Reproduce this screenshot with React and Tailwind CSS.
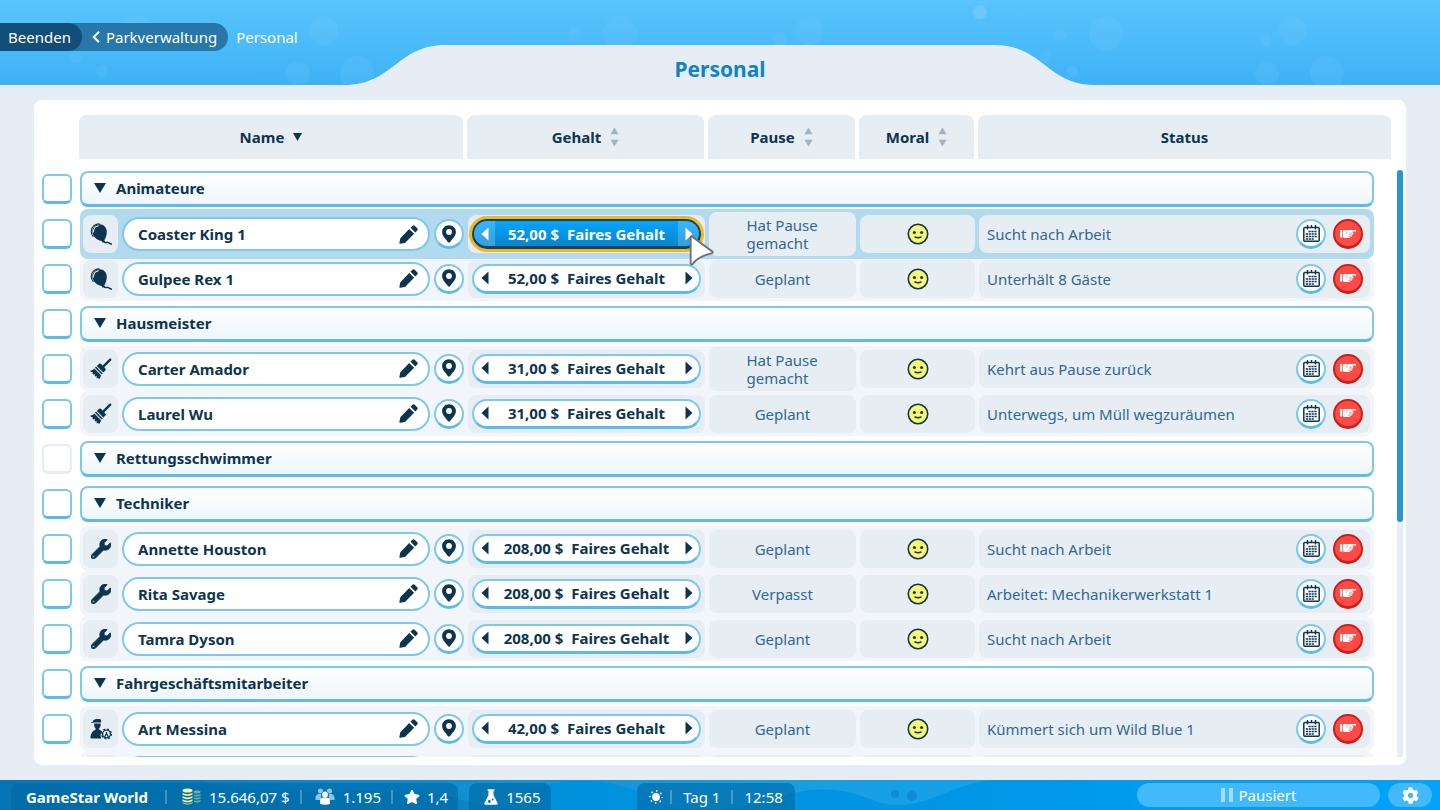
import { useState } from 'react'
import clsx from 'clsx'
import { FaCog, FaStar, FaWrench } from 'react-icons/fa'

const STAFF = [
  {
    id: 'animateure',
    title: 'Animateure',
    icon: BalloonIcon,
    members: [
      { name: 'Coaster King 1', salary: '52,00 $', pause: 'Hat Pause gemacht', status: 'Sucht nach Arbeit' },
      { name: 'Gulpee Rex 1', salary: '52,00 $', pause: 'Geplant', status: 'Unterhält 8 Gäste' },
    ],
  },
  {
    id: 'hausmeister',
    title: 'Hausmeister',
    icon: BroomIcon,
    members: [
      { name: 'Carter Amador', salary: '31,00 $', pause: 'Hat Pause gemacht', status: 'Kehrt aus Pause zurück' },
      { name: 'Laurel Wu', salary: '31,00 $', pause: 'Geplant', status: 'Unterwegs, um Müll wegzuräumen' },
    ],
  },
  { id: 'rettung', title: 'Rettungsschwimmer', icon: BalloonIcon, members: [] },
  {
    id: 'techniker',
    title: 'Techniker',
    icon: WrenchIcon,
    members: [
      { name: 'Annette Houston', salary: '208,00 $', pause: 'Geplant', status: 'Sucht nach Arbeit' },
      { name: 'Rita Savage', salary: '208,00 $', pause: 'Verpasst', status: 'Arbeitet: Mechanikerwerkstatt 1' },
      { name: 'Tamra Dyson', salary: '208,00 $', pause: 'Geplant', status: 'Sucht nach Arbeit' },
    ],
  },
  {
    id: 'fahrgeschaeft',
    title: 'Fahrgeschäftsmitarbeiter',
    icon: AttendantIcon,
    members: [
      { name: 'Art Messina', salary: '42,00 $', pause: 'Geplant', status: 'Kümmert sich um Wild Blue 1' },
    ],
  },
]

// x, y, r
const HEADER_BUBBLES = [
  [137, 33, 17], [76, 57, 6], [102, 71, 6], [298, 73, 12], [324, 31, 14], [357, 73, 17],
  [575, 34, 6], [620, 33, 17], [781, 40, 7], [809, 31, 14], [980, 12, 7], [1060, 35, 6],
  [1106, 34, 17], [1046, 57, 6], [1072, 71, 6], [1266, 40, 6], [1293, 31, 14], [1267, 73, 12], [1327, 73, 17],
]

/* ---------- icons ---------- */

function BalloonIcon() {
  return (
    <svg width="22" height="22" viewBox="0 0 22 22" fill="none" aria-hidden="true">
      <path d="M9.500 1.200c4.200 0 7.300 3.300 7.300 7.600 0 3.300-1.200 6.500-2.600 8.700l1.300 1.500-3.400.4-.3-1.500C7.600 17.400 2.400 13.600 2.400 8.400c0-4 3-7.200 7.100-7.200Z" fill="currentColor" />
      <path d="M9.600.9C4.900.7 1.300 3.900 1.200 8.200c0 2.300.9 4.200 2.200 5.700" stroke="currentColor" strokeWidth="1.100" />
      <path d="M8.400 2.800C5.400 3.400 3.500 5.600 3.400 9" stroke="#e6edf3" strokeWidth="1.100" strokeLinecap="round" />
      <path d="M14 18.800c1.200 1.500 2.500.6 3.800.6 1.400 0 1.600 1.700 3.600 1.600" stroke="currentColor" strokeWidth="1.400" strokeLinecap="round" />
    </svg>
  )
}

function BroomIcon() {
  return (
    <svg width="22" height="22" viewBox="0 0 22 22" aria-hidden="true">
      <path d="M20.200 1.700 12.500 9.400" stroke="currentColor" strokeWidth="2.400" strokeLinecap="round" />
      <path d="M8.900 6.100c.8-.7 1.700-.6 2.300 0l4.100 4.300c.6.700.6 1.500 0 2.200l-2 1.900-6.500-6.600Z" fill="currentColor" />
      <path d="m6 8.600 6.700 6.800-1 1.100L5 9.700Z" fill="currentColor" />
      <path d="m4.300 10.500 6.700 6.800-.4 1.400-1.400 2.200-1.400-.8-1 .2-.4-1.500.8-1-1.800.6-1-1.200.9-1.500-1.900.8-1.300-1.500 1-1.100-1.900.2L0 12.700c1.700-.2 3-.8 4.300-2.200Z" fill="currentColor" />
    </svg>
  )
}

function WrenchIcon() {
  return <FaWrench size={20} stroke="currentColor" strokeWidth="20" aria-hidden="true" />
}

function AttendantIcon() {
  return (
    <svg width="22" height="22" viewBox="0 0 22 22" fill="currentColor" aria-hidden="true">
      <path d="M3.200 2.300C4.500.9 8.800.6 10.800 1.400c.5.800.5 2 .2 3H4.600L1.200 5c-.3-.8 1-1.500 1.900-1.600Z" />
      <path d="M4.200 5.500h6.500c.2 2.300-.5 4-1.700 5l.2 1.300c1.300.5 2.200.9 2.700 1.700-1.500 1.700-1.700 4.600-.6 7H1.500c-.9 0-1.200-.6-1-1.500.3-3.200 1.500-5.800 5-7.200l.1-1.300c-1.100-1.100-1.600-2.800-1.400-5Z" />
      <circle cx="16.500" cy="16" r="3.900" fill="none" stroke="currentColor" strokeWidth="1.300" />
      <circle cx="16.500" cy="16" r="5" fill="none" stroke="currentColor" strokeWidth="1.200" strokeDasharray="1.900 2.030" />
      <path d="m14.400 19.600 2.100-4.200 2.100 4.200M16.500 14v2" fill="none" stroke="currentColor" strokeWidth="1.200" />
    </svg>
  )
}

function PencilIcon() {
  return (
    <svg width="19" height="19" viewBox="0 0 19 19" fill="currentColor" aria-hidden="true">
      <path d="M10.200 3.900 15.100 8.800 6.500 17.400c-.3.300-.6.500-1 .6L1.300 18.800c-.6.100-1-.4-.9-.9l.8-4.200c.1-.4.300-.7.600-1Z" />
      <path d="M11.500 2.700 13.400.8c.7-.7 1.600-.7 2.300 0l2.500 2.500c.7.700.7 1.600 0 2.300l-1.900 1.900Z" />
    </svg>
  )
}

function PinIcon() {
  return (
    <svg width="14" height="18" viewBox="0 0 14 18" fill="currentColor" aria-hidden="true">
      <path fillRule="evenodd" d="M7 .3c3.900 0 6.900 2.900 6.900 6.600 0 3.900-3.300 6.600-5.700 10-.6.900-1.800.9-2.400 0C3.400 13.500.1 10.800.1 6.900.1 3.200 3.100.3 7 .3Zm0 3.800a2.900 2.900 0 1 0 0 5.800 2.900 2.900 0 0 0 0-5.800Z" />
    </svg>
  )
}

function CalendarIcon() {
  return (
    <svg width="17" height="17" viewBox="0 0 17 17" fill="none" stroke="currentColor" aria-hidden="true">
      <rect x=".8" y="2.500" width="15.400" height="13.700" rx="1" strokeWidth="1.500" />
      <path d="M4.500 0v4.500M8.500 0v3M12.500 0v4.500" strokeWidth="1.400" />
      <path d="M5.500 6.500h8.700M2.800 9h11.400M2.800 11.500h11.400M2.800 14h8.500" strokeWidth="1.600" strokeDasharray="2.200 .7" />
    </svg>
  )
}

function PointingHandIcon() {
  return (
    <svg width="16" height="10" viewBox="0 0 16 10" fill="currentColor" aria-hidden="true">
      <path d="M0 1h2v7.500H0ZM2.700 1.800 4 .9h2.300l.4.700L8 .9h8v1.700h-3.600v1h.9v1.500h-.8v1.500h-1v1.500H10V9H4.200l-1.500-.7Z" />
      <path d="M5.700 4.700 8 2.700M9.200 4.200h2.900M8.900 5.900h2.700M8.600 7.500h2" stroke="#ff4b45" strokeWidth=".6" />
    </svg>
  )
}

function SmileyIcon() {
  return (
    <svg width="22" height="22" viewBox="0 0 22 22" role="img" aria-label="Zufrieden">
      <circle cx="11" cy="11" r="9.700" fill="#f9f871" stroke="#0d3550" strokeWidth="1.600" />
      <circle cx="7.400" cy="9.500" r="1.500" fill="#0d3550" />
      <circle cx="14.600" cy="9.500" r="1.500" fill="#0d3550" />
      <path d="M8 14c1.800.9 4.200.9 6 0" fill="none" stroke="#0d3550" strokeWidth="1.400" strokeLinecap="round" />
    </svg>
  )
}

function TriangleDown({ width, height }) {
  return (
    <svg width={width} height={height} viewBox="0 0 12 10" preserveAspectRatio="none" fill="currentColor" aria-hidden="true">
      <path d="M0 0h12L6 10Z" />
    </svg>
  )
}

function SortIcon() {
  return (
    <svg width="9" height="20" viewBox="0 0 9 20" fill="#a3b5c1" aria-hidden="true">
      <path d="M4.500.6 8.600 7.200H.4ZM.4 12.800h8.200L4.500 19.400Z" />
    </svg>
  )
}

function ArrowIcon({ flip }) {
  return (
    <svg width="8" height="14" viewBox="0 0 8 14" fill="currentColor" className={clsx(flip && 'rotate-180')} aria-hidden="true">
      <path d="M.5.500 7.500 7 .5 13.500Z" />
    </svg>
  )
}

function CursorIcon() {
  return (
    <svg width="26" height="34" viewBox="0 0 28 36" className="pointer-events-none absolute top-[19px] left-[221px] z-20" aria-hidden="true">
      <path d="M3.200 2.500c-.8-.5-1.400 0-1.400.9v28c0 1.300 1.500 1.500 2.300.5 2.900-4.300 7.700-8.500 20.200-11.300 1.300-.3 1.600-1.500.6-2.200Z" fill="#fff" stroke="#6d7176" strokeWidth="2" strokeLinejoin="round" />
    </svg>
  )
}

function CoinsIcon() {
  return (
    <svg width="19" height="17" viewBox="0 0 19 17" aria-hidden="true">
      <g fill="#f3f39c">
        <ellipse cx="5.500" cy="2.500" rx="5" ry="2" />
        <path d="M.5 4.700c2 1.900 8 1.900 10 0v1.700c-2 1.900-8 1.900-10 0ZM.5 8c2 1.900 8 1.900 10 0v1.700c-2 1.900-8 1.900-10 0ZM.5 11.200c2 1.900 8 1.900 10 0v1.700c-2 1.900-8 1.900-10 0ZM.5 14.300c2 1.900 8 1.900 10 0v.8c-2 1.900-8 1.900-10 0Z" />
      </g>
      <g fill="#6fae9f">
        <ellipse cx="15" cy="4" rx="3.600" ry="1.400" />
        <path d="M12 6.200c2 .9 4.600.7 6.600-.2v1.500c-2 1-4.600 1.200-6.600.4ZM12 9.200c2 .9 4.600.7 6.600-.2v1.500c-2 1-4.600 1.200-6.600.4ZM12 12.200c2 .9 4.600.7 6.600-.2v1.500c-2 1-4.600 1.200-6.600.4Z" />
      </g>
    </svg>
  )
}

function GuestsIcon() {
  return (
    <svg width="20" height="17" viewBox="0 0 20 17" aria-hidden="true">
      <g fill="#8cc4e4">
        <circle cx="5.500" cy="3" r="2.600" />
        <circle cx="14.500" cy="3" r="2.600" />
        <path d="M.5 12V9.500C.5 7.200 2 6 4.200 6h2v6ZM19.500 12V9.500c0-2.300-1.500-3.500-3.700-3.500h-2v6Z" />
      </g>
      <circle cx="10" cy="6.500" r="3.600" fill="#0d70ab" />
      <circle cx="10" cy="6.500" r="2.900" fill="#fff" />
      <path d="M5 16v-2.600c0-2.400 1.500-3.700 3.500-3.900h3c2 .2 3.500 1.500 3.500 3.900V16c-3 1-7 1-10 0Z" fill="#fff" />
    </svg>
  )
}

function FlaskIcon() {
  return (
    <svg width="14" height="16" viewBox="0 0 14 16" aria-hidden="true">
      <path d="M3.700.3h6.600v1.800h-.8v4l4 8c.4.900 0 1.700-1 1.700h-11c-1 0-1.400-.8-1-1.700l4-8v-4h-.8Z" fill="#fff" />
      <circle cx="5.300" cy="12.500" r="1.400" fill="#0b70ae" />
      <circle cx="8.700" cy="10.500" r=".9" fill="#0b70ae" />
    </svg>
  )
}

function SunIcon() {
  return (
    <svg width="14" height="14" viewBox="0 0 14 14" aria-hidden="true">
      <circle cx="7" cy="7" r="3.900" fill="#fff" />
      <circle cx="7" cy="7" r="6.100" fill="none" stroke="#fff" strokeWidth="1.500" strokeDasharray="1.500 3.290" strokeDashoffset=".75" />
    </svg>
  )
}

/* ---------- header ---------- */

function Header() {
  return (
    <header className="relative h-[85px] shrink-0 bg-linear-to-b from-[#59c4fe] to-[#3eb2f5] pt-[23px]">
      <svg className="absolute inset-0 h-full w-full" viewBox="0 0 1440 85" preserveAspectRatio="xMidYMid slice" aria-hidden="true">
        {HEADER_BUBBLES.map(([x, y, r]) => (
          <circle key={`${x}-${y}`} cx={x} cy={y} r={r} fill="#7fd0ff" opacity=".16" />
        ))}
        <circle cx="980" cy="12" r="7" fill="#9fdcff" opacity=".25" />
      </svg>

      <nav className="relative flex h-7 items-center text-white" aria-label="Pfad">
        <div className="flex h-full items-center rounded-r-[14px] bg-[#2778a8]">
          <a href="#beenden" className="flex h-full items-center rounded-r-[14px] bg-[#124e78] pr-[11px] pl-2">Beenden</a>
          <a href="#parkverwaltung" className="flex h-full items-center gap-[6px] pr-[11px] pl-[10px]">
            <svg width="8" height="12" viewBox="0 0 8 12" fill="none" stroke="currentColor" strokeWidth="2" aria-hidden="true">
              <path d="M7 .800 1.800 6 7 11.200" />
            </svg>
            Parkverwaltung
          </a>
        </div>
        <span className="pl-2">Personal</span>
      </nav>

      <div className="absolute inset-x-0 bottom-0 flex h-10 justify-center">
        <svg width="102" height="40" viewBox="0 0 102 40" aria-hidden="true">
          <path d="M0 40C50 40 52 0 102 0v40Z" fill="#e6edf4" />
        </svg>
        <div className="flex w-[38%] items-center justify-center bg-[#e6edf4] pt-2">
          <h1 className="text-[21px] leading-[30px] font-bold text-[#1383c4]">Personal</h1>
        </div>
        <svg width="102" height="40" viewBox="0 0 102 40" aria-hidden="true">
          <path d="M102 40C52 40 50 0 0 0v40Z" fill="#e6edf4" />
        </svg>
      </div>
    </header>
  )
}

/* ---------- table ---------- */

function HeadCell({ children, sorted, sortable }) {
  return (
    <th scope="col" className="px-[2px]">
      <div className="flex h-[44px] items-center justify-center rounded-t-lg bg-[#e6edf3] font-bold">
        {sortable ? (
          <button type="button" className="flex items-center gap-[9px]">
            {children}
            {sorted ? <TriangleDown width={9} height={8} /> : <SortIcon />}
          </button>
        ) : (
          children
        )}
      </div>
    </th>
  )
}

function RowCheckbox({ label, disabled }) {
  return (
    <input
      type="checkbox"
      aria-label={label}
      disabled={disabled}
      className={clsx(
        'block size-[30px] appearance-none rounded-md border-2 border-b-3 bg-white',
        disabled ? 'border-[#e6ecf1]' : 'border-[#7dc9ee] border-b-[#5cbbe9] checked:bg-[#5cbbe9]',
      )}
    />
  )
}

function RoundButton({ label, danger, children }) {
  return (
    <button
      type="button"
      aria-label={label}
      className={clsx(
        'flex size-[30px] shrink-0 items-center justify-center rounded-full border-2 border-b-3',
        danger ? 'border-[#c8201d] bg-[#ff4b45] text-white' : 'border-[#7dc9ee] border-b-[#5cbbe9] bg-white',
      )}
    >
      {children}
    </button>
  )
}

function SalaryStepper({ salary, active }) {
  return (
    <div
      className={clsx(
        'flex h-[30px] items-center rounded-full border-2 border-b-3 font-bold',
        active
          ? 'border-[#0d4560] bg-linear-to-b from-[#07a3fa] to-[#0787cf] text-white ring-3 ring-[#f3b71d]'
          : 'border-[#7dc9ee] border-b-[#5cbbe9] bg-white',
      )}
    >
      <button
        type="button"
        aria-label="Gehalt senken"
        className={clsx('flex h-full w-[21px] items-center justify-center rounded-l-full', active && 'bg-white/20')}
      >
        <ArrowIcon flip />
      </button>
      <span className="flex flex-1 justify-center gap-2">
        <span>{salary}</span>
        <span>Faires Gehalt</span>
      </span>
      <button
        type="button"
        aria-label="Gehalt erhöhen"
        className={clsx('flex h-full w-[21px] items-center justify-center rounded-r-full', active && 'bg-white/20')}
      >
        <ArrowIcon />
      </button>
    </div>
  )
}

function StaffRow({ member, icon: Icon, active }) {
  const cell = clsx('flex items-center', active ? 'bg-[#b2daee]' : 'bg-[#f2f6fa]')
  return (
    <tr
      className={clsx(
        'grid grid-cols-[38px_386px_241px_151px_119px_1fr]',
        active ? 'relative z-10 -mt-[2px] -mb-[3px] h-[50px]' : 'h-[45px]',
      )}
    >
      <td className="flex items-center">
        <RowCheckbox label={member.name} />
      </td>
      <td className={clsx(cell, 'gap-1 rounded-l-lg pr-[2px] pl-[3px]')}>
        <span className="flex h-[38px] w-[35px] items-center justify-center rounded-lg bg-[#e6edf3]">
          <Icon />
        </span>
        <div className="flex h-[34px] flex-1 items-center rounded-full border-2 border-[#7dc9ee] bg-white pr-[10px] pl-[14px]">
          <input
            type="text"
            aria-label="Name"
            defaultValue={member.name}
            className="min-w-0 flex-1 bg-transparent font-bold outline-none"
          />
          <button type="button" aria-label="Umbenennen">
            <PencilIcon />
          </button>
        </div>
        <RoundButton label="Auf Karte zeigen">
          <PinIcon />
        </RoundButton>
      </td>
      <td className={clsx(cell, 'px-[2px]')}>
        <div className="relative flex h-[38px] w-full flex-col justify-center rounded-lg bg-[#e6edf3] px-1">
          <SalaryStepper salary={member.salary} active={active} />
          {active && <CursorIcon />}
        </div>
      </td>
      <td className={clsx(cell, 'px-[2px]')}>
        <div className="flex min-h-[38px] w-full items-center justify-center rounded-lg bg-[#e6edf3] py-1 leading-[18px] text-[#32698f]">
          <span className="max-w-[72px]">{member.pause}</span>
        </div>
      </td>
      <td className={clsx(cell, 'px-[2px]')}>
        <div className="flex h-[38px] w-full items-center justify-center rounded-lg bg-[#e6edf3]">
          <SmileyIcon />
        </div>
      </td>
      <td className={clsx(cell, 'rounded-r-lg pr-1 pl-[2px]')}>
        <div className="flex h-[38px] w-full items-center gap-[7px] rounded-lg bg-[#e6edf3] pr-[7px] pl-2">
          <span className="flex-1 leading-[18px] text-[#32698f]">{member.status}</span>
          <RoundButton label="Dienstplan">
            <CalendarIcon />
          </RoundButton>
          <RoundButton label="Entlassen" danger>
            <PointingHandIcon />
          </RoundButton>
        </div>
      </td>
    </tr>
  )
}

function GroupRow({ group, open, onToggle }) {
  return (
    <tr className="grid h-[45px] grid-cols-[38px_1fr]">
      <td className="flex items-center">
        <RowCheckbox label={group.title} disabled={group.members.length === 0} />
      </td>
      <td colSpan={5} className="flex items-center">
        <button
          type="button"
          aria-expanded={open}
          onClick={onToggle}
          className="flex h-9 w-full items-center gap-[10px] rounded-lg border-2 border-b-3 border-[#7dc9ee] border-b-[#5cbbe9] bg-linear-to-b from-white to-[#eef6fb] px-3 font-bold"
        >
          <TriangleDown width={12} height={10} />
          {group.title}
        </button>
      </td>
    </tr>
  )
}

function NextRowEdge() {
  return (
    <tr className="grid h-[45px] grid-cols-[38px_386px_241px_151px_119px_1fr]" aria-hidden="true">
      <td />
      <td className="flex items-center gap-1 rounded-tl-lg bg-[#f2f6fa] pr-9 pl-[3px]">
        <span className="h-[38px] w-[35px] rounded-lg bg-[#e6edf3]" />
        <span className="h-[36px] flex-1 rounded-full border-2 border-[#7dc9ee] bg-white" />
      </td>
      <td className="bg-[#f2f6fa] px-[2px] py-1">
        <div className="h-full rounded-lg bg-[#e6edf3]" />
      </td>
      <td className="bg-[#f2f6fa] px-[2px] py-1">
        <div className="h-full rounded-lg bg-[#e6edf3]" />
      </td>
      <td className="bg-[#f2f6fa] px-[2px] py-1">
        <div className="h-full rounded-lg bg-[#e6edf3]" />
      </td>
      <td className="rounded-tr-lg bg-[#f2f6fa] py-1 pr-1 pl-[2px]">
        <div className="h-full rounded-lg bg-[#e6edf3]" />
      </td>
    </tr>
  )
}

function StaffTable() {
  const [closed, setClosed] = useState({})

  return (
    <section className="flex min-h-0 flex-1 gap-1 rounded-lg bg-white pt-[15px] pr-[3px] pb-2 pl-2">
      <table className="flex min-w-0 flex-1 flex-col">
        <thead className="block">
          <tr className="grid grid-cols-[35px_388px_241px_151px_119px_1fr]">
            <td />
            <HeadCell sortable sorted>Name</HeadCell>
            <HeadCell sortable>Gehalt</HeadCell>
            <HeadCell sortable>Pause</HeadCell>
            <HeadCell sortable>Moral</HeadCell>
            <HeadCell>Status</HeadCell>
          </tr>
        </thead>
        <tbody className="mt-[7px] block min-h-0 flex-1 overflow-hidden pr-[19px]">
          {STAFF.map((group) => [
            <GroupRow
              key={group.id}
              group={group}
              open={!closed[group.id]}
              onToggle={() => setClosed((c) => ({ ...c, [group.id]: !c[group.id] }))}
            />,
            ...(closed[group.id] ? [] : group.members).map((m) => (
              <StaffRow key={m.name} member={m} icon={group.icon} active={m.name === 'Coaster King 1'} />
            )),
          ])}
          <NextRowEdge />
        </tbody>
      </table>
      <div className="mt-[55px] w-[6px] rounded-t-full bg-[#e6edf3]">
        <div className="h-3/5 rounded-full bg-[#2796d3]" />
      </div>
    </section>
  )
}

/* ---------- footer ---------- */

function Divider() {
  return <span className="h-[14px] w-[2px] bg-white/25" />
}

function StatusBar() {
  return (
    <footer className="relative grid h-[30px] shrink-0 grid-cols-[1fr_auto_1fr] overflow-hidden bg-linear-to-r from-[#0878b8] via-[#1a9ee2] via-55% to-[#00a4fb] pt-[3px] pr-2 pl-[11px] text-white">
      <svg className="absolute inset-0 h-full w-full" viewBox="0 0 1440 30" preserveAspectRatio="none" aria-hidden="true">
        <defs>
          <linearGradient id="wave" x1="500" x2="1440" y1="0" y2="0" gradientUnits="userSpaceOnUse">
            <stop offset="0" stopColor="#0090dc" />
            <stop offset=".5" stopColor="#0097e6" />
            <stop offset="1" stopColor="#00a4fb" />
          </linearGradient>
        </defs>
        <path d="M530 10C570-6 620 0 650 18c20 14 80 16 120 2 50-18 80-10 110 3 50 10 70-23 120-23h440v30H500Z" fill="url(#wave)" />
        <path d="M200 0c60 22 200 4 240 14 30 8 50 16 100 16H0V0Z" fill="#006fae" opacity=".35" />
        <circle cx="895" cy="14" r="4" fill="#0a84cc" opacity=".7" />
        <circle cx="912" cy="16" r="5" fill="#0a84cc" opacity=".7" />
      </svg>

      <div className="relative flex gap-[11px]">
        <div className="flex items-center rounded-t-lg bg-[#006aa6]/65 pr-[10px] pl-[15px]">
          <span className="font-bold">GameStar World</span>
          <span className="flex items-center gap-[15px] pl-[17px]">
            <Divider />
            <span className="flex items-center gap-2">
              <CoinsIcon />
              15.646,07 $
            </span>
          </span>
          <span className="flex items-center gap-[13px] pl-[10px]">
            <Divider />
            <span className="flex items-center gap-2">
              <GuestsIcon />
              1.195
            </span>
          </span>
          <span className="flex items-center gap-[11px] pl-[10px]">
            <Divider />
            <span className="flex items-center gap-[7px]">
              <FaStar size={16} aria-hidden="true" />
              1,4
            </span>
          </span>
        </div>
        <div className="flex items-center gap-2 rounded-t-lg bg-[#006aa6]/65 pr-[11px] pl-[15px]">
          <FlaskIcon />
          1565
        </div>
      </div>

      <div className="relative mr-[11px] flex items-center gap-[11px] rounded-t-lg bg-[#006aa6]/65 px-3">
        <span className="flex items-center gap-[7px]">
          <SunIcon />
          <Divider />
        </span>
        <span>Tag 1</span>
        <Divider />
        <span>12:58</span>
      </div>

      <div className="relative flex items-start justify-end gap-2">
        <button type="button" className="flex h-6 w-[243px] items-center justify-center gap-[6px] rounded-full bg-[#42b9fa]">
          <svg width="12" height="14" viewBox="0 0 12 14" fill="#a6dcfd" aria-hidden="true">
            <path d="M0 0h4v14H0ZM8 0h4v14H8Z" />
          </svg>
          Pausiert
        </button>
        <button type="button" aria-label="Einstellungen" className="flex h-6 w-11 items-center justify-center rounded-full bg-[#42b9fa]">
          <FaCog size={17} />
        </button>
      </div>
    </footer>
  )
}

export default function App() {
  return (
    <div className="flex h-screen flex-col overflow-hidden bg-[#e6edf4] font-['Noto_Sans',sans-serif] text-[15px] leading-6 text-[#0d3550]">
      <Header />
      <main className="flex min-h-0 flex-1 flex-col px-[34px] py-[15px]">
        <StaffTable />
      </main>
      <StatusBar />
    </div>
  )
}
